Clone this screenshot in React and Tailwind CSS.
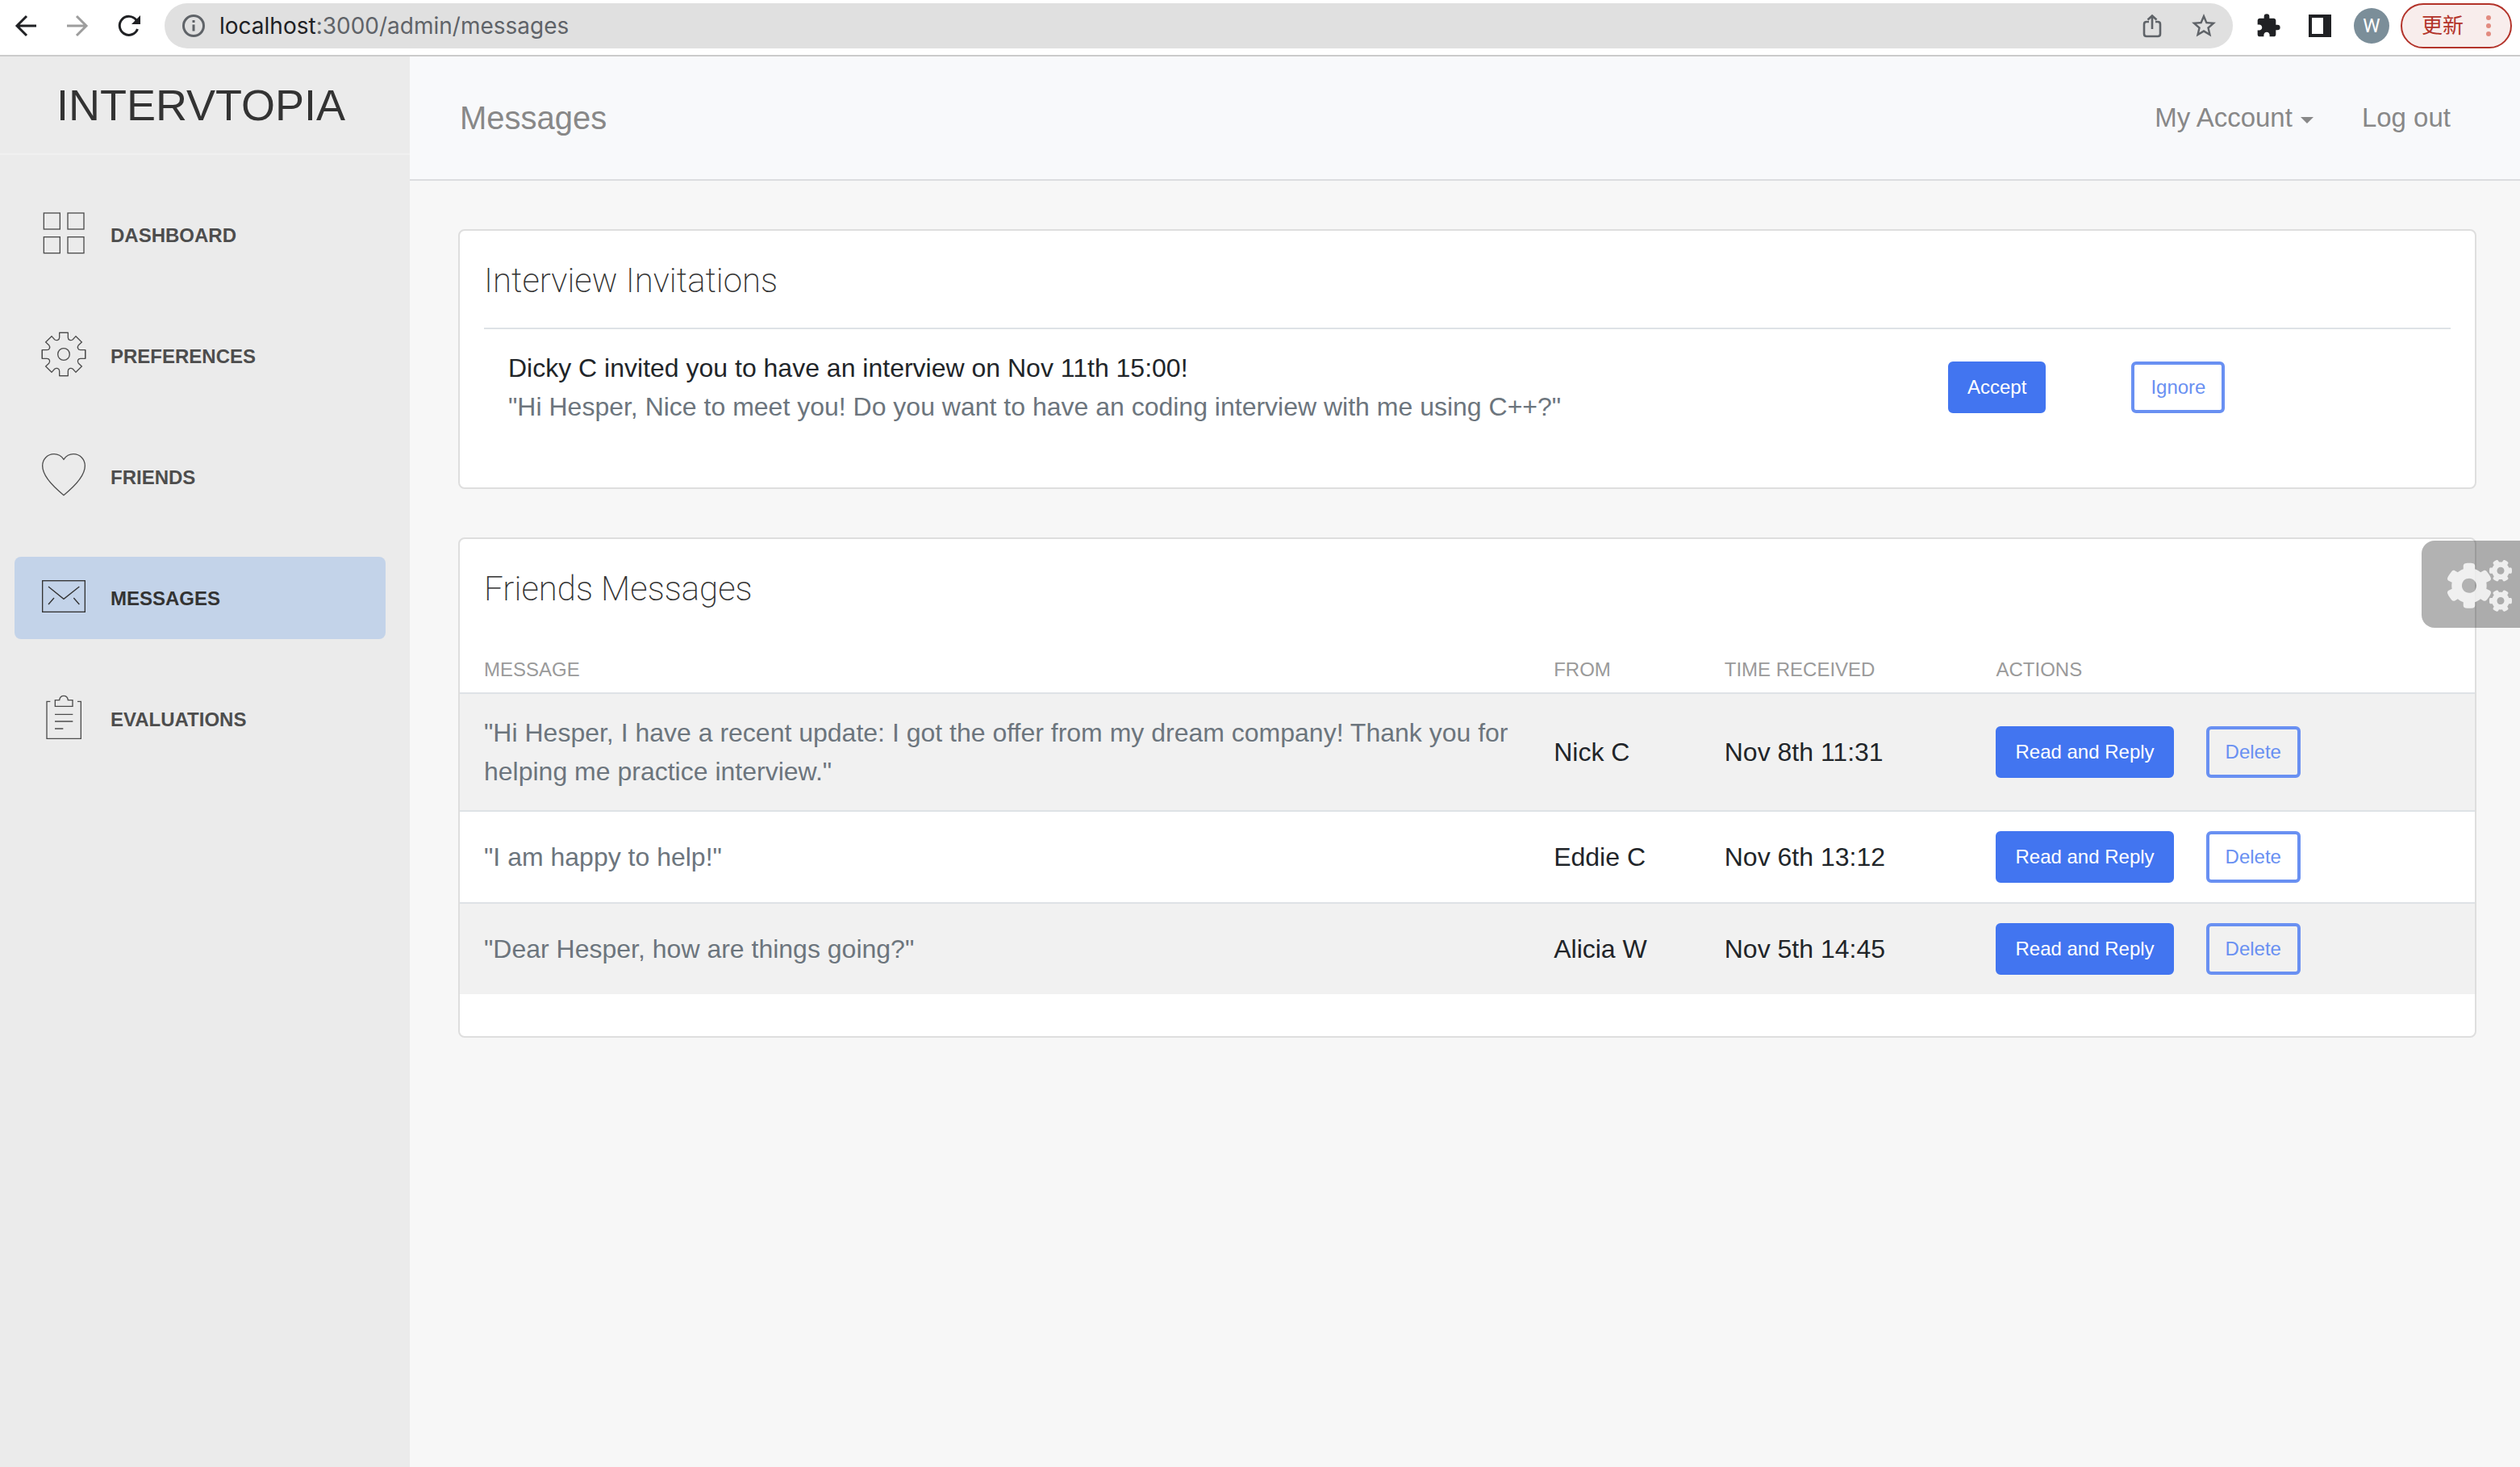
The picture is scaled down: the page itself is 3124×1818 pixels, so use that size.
import React from "react";
import { FaCogs } from "react-icons/fa";
import { MdOutlineStarBorder, MdExtension } from "react-icons/md";

const NAV = [
  { label: "Dashboard", icon: "dashboard" },
  { label: "Preferences", icon: "gear" },
  { label: "Friends", icon: "heart" },
  { label: "Messages", icon: "mail", active: true },
  { label: "Evaluations", icon: "paper" },
];

const MESSAGES = [
  {
    text: '"Hi Hesper, I have a recent update: I got the offer from my dream company! Thank you for helping me practice interview."',
    from: "Nick C",
    time: "Nov 8th 11:31",
  },
  { text: '"I am happy to help!"', from: "Eddie C", time: "Nov 6th 13:12" },
  { text: '"Dear Hesper, how are things going?"', from: "Alicia W", time: "Nov 5th 14:45" },
];

const GEAR_QUARTER =
  "M-80 16 V-16 H-62 C-53 -16 -49 -26 -55 -34 L-67 -45 L-45 -67 L-34 -55 C-26 -49 -16 -53 -16 -62 V-80 H16";

function NavIcon({ name }) {
  return (
    <svg
      className="size-14 shrink-0"
      viewBox="-84 -84 168 168"
      fill="none"
      stroke="currentColor"
      strokeWidth="4"
      aria-hidden="true"
    >
      {name === "dashboard" && (
        <>
          <rect x="-74" y="-75" width="60" height="60" />
          <rect x="15" y="-75" width="60" height="60" />
          <rect x="-74" y="14" width="60" height="60" />
          <rect x="15" y="14" width="60" height="60" />
        </>
      )}
      {name === "gear" && (
        <>
          <path d={GEAR_QUARTER} />
          <path d={GEAR_QUARTER} transform="rotate(90)" />
          <path d={GEAR_QUARTER} transform="rotate(180)" />
          <path d={GEAR_QUARTER} transform="rotate(270)" />
          <circle r="22" />
        </>
      )}
      {name === "heart" && (
        <path d="M0 -59 C-9 -72 -22 -79 -36 -79 C-61 -79 -79 -59 -79 -35 C-79 -2 -42 40 0 74 C42 40 79 -2 79 -35 C79 -59 61 -79 36 -79 C22 -79 9 -72 0 -59 Z" />
      )}
      {name === "mail" && (
        <>
          <rect x="-79" y="-58" width="158" height="116" />
          <path d="M-57 -36 L0 10 L58 -36 M-36 6 L-57 30 M37 6 L58 30" />
        </>
      )}
      {name === "paper" && (
        <>
          <path d="M-50 -59 H-63 V79 H64 V-59 H51" />
          <path d="M-32 -64 H-16 C-15 -74 -9 -80 0 -80 C9 -80 15 -74 16 -64 H33 V-41 H-32 Z" />
          <path d="M-33 -11 H34 M-33 15 H34 M-33 42 H-2" />
        </>
      )}
    </svg>
  );
}

function BrowserBar() {
  return (
    <div className="flex items-center border-b-2 border-[#cbcbcb] bg-white pt-1 pr-2.5 pb-2 pl-4 font-[Roboto,'Noto_Sans_CJK_SC',sans-serif] text-[#202124]">
      <div className="flex items-center gap-8">
        <button aria-label="Back" className="size-8">
          <svg viewBox="0 0 32 32" className="size-8" fill="none" stroke="currentColor" strokeWidth="3">
            <path d="M29 16 H5 M17 4 L5 16 L17 28" />
          </svg>
        </button>
        <button aria-label="Forward" className="size-8 text-[#9d9d9d]">
          <svg viewBox="0 0 32 32" className="size-8" fill="none" stroke="currentColor" strokeWidth="3">
            <path d="M3 16 H27 M15 4 L27 16 L15 28" />
          </svg>
        </button>
        <button aria-label="Reload" className="size-8">
          <svg viewBox="0 0 32 32" className="size-8" fill="none" stroke="currentColor" strokeWidth="3">
            <path d="M26.500 20 A11.500 11.500 0 1 1 25 9" />
            <path d="M30 3 V14 H19 Z" fill="currentColor" stroke="none" />
          </svg>
        </button>
      </div>
      <div className="ml-7 flex h-14 flex-1 items-center rounded-full bg-[#e0e0e0] px-5 text-[#5f6368]">
        <svg viewBox="0 0 32 32" className="size-8 shrink-0" fill="none" stroke="currentColor" strokeWidth="3" aria-hidden="true">
          <circle cx="16" cy="16" r="12.500" />
          <path d="M16 14.500 V22.500 M16 9 V12" />
        </svg>
        <span className="ml-4 flex-1 text-[28px] leading-10 font-[Inter,sans-serif]">
          <span className="text-[#202124]">localhost</span>:3000/admin/messages
        </span>
        <div className="flex items-center gap-8">
          <button aria-label="Share" className="size-8">
            <svg viewBox="0 0 32 32" className="size-8" fill="none" stroke="currentColor" strokeWidth="2.600">
              <path d="M12 11 H9 Q6 11 6 14 V26 Q6 29 9 29 H23 Q26 29 26 26 V14 Q26 11 23 11 H20" />
              <path d="M16 20 V4 M10.500 8.500 L16 3.500 L21.500 8.500" />
            </svg>
          </button>
          <button aria-label="Bookmark" className="flex size-8 items-center justify-center">
            <MdOutlineStarBorder className="size-9 shrink-0" />
          </button>
        </div>
      </div>
      <div className="ml-7 flex items-center gap-8">
        <button aria-label="Extensions" className="size-8">
          <MdExtension className="size-8" />
        </button>
        <button aria-label="Side panel" className="size-8">
          <svg viewBox="0 0 32 32" className="size-8" fill="currentColor">
            <path d="M2 2 H30 V30 H2 Z M6 6 V26 H20 V6 Z" fillRule="evenodd" />
          </svg>
        </button>
      </div>
      <button aria-label="Profile" className="ml-[26px] size-11 rounded-full bg-[#7b8e99] text-2xl text-white">
        W
      </button>
      <button className="ml-3.5 flex h-14 items-center gap-7 rounded-full border-2 border-[#b3332a] bg-[#f8edec] px-6 text-[26px] text-[#b3332a]">
        更新
        <svg viewBox="0 0 6 26" className="h-[26px] w-1.5" fill="#e28b80" aria-hidden="true">
          <circle cx="3" cy="3" r="3" />
          <circle cx="3" cy="13" r="3" />
          <circle cx="3" cy="23" r="3" />
        </svg>
      </button>
    </div>
  );
}

function Sidebar() {
  return (
    <aside className="w-[508px] shrink-0 bg-[#ebebeb]">
      <a href="#home" className="block border-b-2 border-[#f0f0f0] py-6 pl-[70px] text-[54px] leading-[72px] text-[#333333]">
        INTERVTOPIA
      </a>
      <nav className="mt-12 flex flex-col gap-12 pr-[30px] pl-[18px]">
        {NAV.map((item) => (
          <a
            key={item.label}
            href={"#" + item.icon}
            className={
              item.active
                ? "flex h-[102px] items-center gap-[30px] rounded-lg bg-[#c3d3e9] pl-[33px] text-2xl font-bold text-[#333333] uppercase"
                : "flex h-[102px] items-center gap-[30px] rounded-lg pl-[33px] text-2xl font-bold text-[#4d4d4d] uppercase"
            }
          >
            <span className="pb-1">
              <NavIcon name={item.icon} />
            </span>
            <span className="pt-0.5">{item.label}</span>
          </a>
        ))}
      </nav>
    </aside>
  );
}

function Button({ outline, children }) {
  return (
    <button
      className={
        outline
          ? "h-16 rounded-md border-4 border-[#6990f2] px-5 text-2xl text-[#6990f2]"
          : "h-16 rounded-md border-4 border-[#4275f0] bg-[#4275f0] px-5 text-2xl text-white"
      }
    >
      {children}
    </button>
  );
}

function Card({ title, children }) {
  return (
    <section className="rounded-lg border-2 border-[#dedede] bg-white pt-8 pb-[52px]">
      <h4 className="px-[30px] font-[Roboto,sans-serif] text-[42px] leading-[60px] font-extralight text-[#333333]">{title}</h4>
      {children}
    </section>
  );
}

export default function App() {
  return (
    <div className="flex min-h-screen flex-col bg-[#f7f7f7] font-['Liberation_Sans',Arial,sans-serif] text-[32px] leading-[48px] text-[#212529]">
      <BrowserBar />
      <div className="relative flex flex-1">
        <Sidebar />
        <div className="min-w-0 flex-1">
          <header className="flex h-[154px] items-center justify-between border-b-2 border-[#dcdde0] bg-[#f8f9fb] pr-[86px] pl-[62px] text-[#888888]">
            <h1 className="text-[40px]">Messages</h1>
            <nav className="flex items-center gap-[60px] text-[33px]">
              <button className="flex items-center gap-2.5">
                My Account
                <svg viewBox="0 0 16 8" className="mt-1.5 h-2 w-4" fill="currentColor" aria-hidden="true">
                  <path d="M0 0 H16 L8 8 Z" />
                </svg>
              </button>
              <a href="#logout">Log out</a>
            </nav>
          </header>
          <main className="flex flex-col gap-[60px] pt-[60px] pr-[54px] pb-[60px] pl-[60px]">
            <Card title="Interview Invitations">
              <div className="mx-[30px] mt-7 flex border-t-2 border-[#dee2e6] py-6 pl-[30px]">
                <div className="flex-1">
                  <p>Dicky C invited you to have an interview on Nov 11th 15:00!</p>
                  <p className="text-[#6c757d]">
                    "Hi Hesper, Nice to meet you! Do you want to have an coding interview with me using C++?"
                  </p>
                </div>
                <div className="flex w-[623px] items-center gap-[106px]">
                  <Button>Accept</Button>
                  <Button outline>Ignore</Button>
                </div>
              </div>
            </Card>
            <Card title="Friends Messages">
              <table className="mt-6 w-full table-fixed text-left">
                <colgroup>
                  <col className="w-[53.65%]" />
                  <col className="w-[8.47%]" />
                  <col className="w-[13.48%]" />
                  <col />
                </colgroup>
                <thead className="text-2xl leading-9 text-[#9a9a9a] uppercase">
                  <tr>
                    <th className="px-4 pt-7 pb-2.5 pl-[30px] font-normal">Message</th>
                    <th className="px-4 pt-7 pb-2.5 font-normal">From</th>
                    <th className="px-4 pt-7 pb-2.5 font-normal">Time Received</th>
                    <th className="px-4 pt-7 pb-2.5 font-normal">Actions</th>
                  </tr>
                </thead>
                <tbody>
                  {MESSAGES.map((m) => (
                    <tr key={m.from} className="border-t-2 border-[#dee2e6] odd:bg-[#f1f1f1]">
                      <td className="py-6 pr-0 pl-[30px] text-[#6c757d]">{m.text}</td>
                      <td className="px-4 py-6">{m.from}</td>
                      <td className="px-4 py-6">{m.time}</td>
                      <td className="px-4 py-6">
                        <div className="flex items-center gap-10">
                          <Button>Read and Reply</Button>
                          <Button outline>Delete</Button>
                        </div>
                      </td>
                    </tr>
                  ))}
                </tbody>
              </table>
            </Card>
          </main>
        </div>
        <button
          aria-label="Settings"
          className="absolute top-[600px] right-0 flex h-[108px] w-[122px] items-center justify-end rounded-l-2xl bg-black/30 pt-1 pr-2.5 text-white/80"
        >
          <FaCogs className="h-16 w-20" />
        </button>
      </div>
    </div>
  );
}
